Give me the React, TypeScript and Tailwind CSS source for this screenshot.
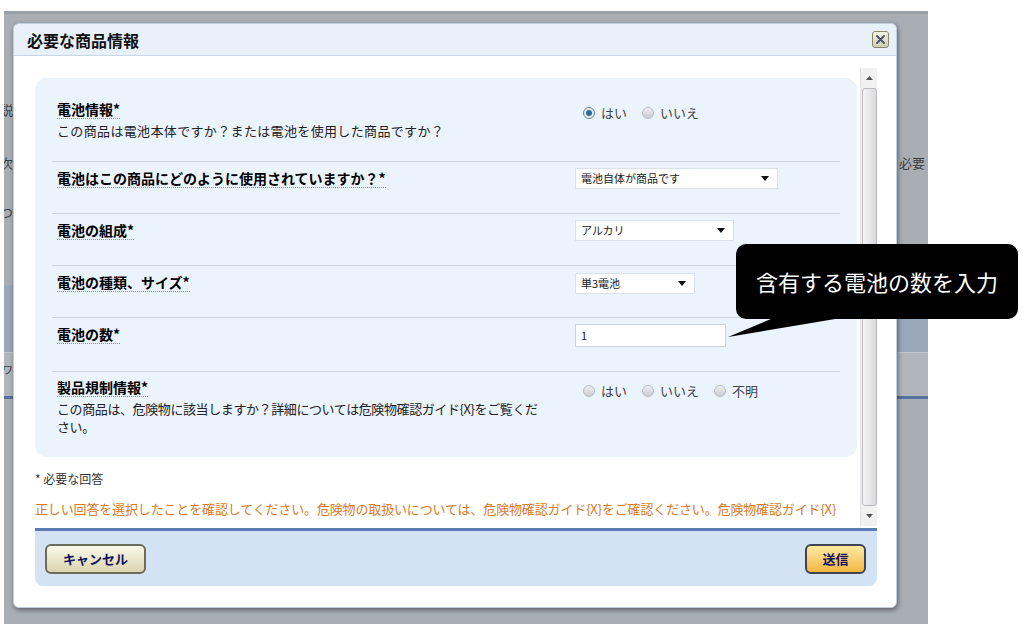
import React from 'react';

const Radio = ({ checked = false }: { checked?: boolean }) => (
  <span
    className={`inline-flex w-[12px] h-[12px] shrink-0 rounded-full border items-center justify-center ${
      checked
        ? 'border-[#6f8396] bg-[#e4ecf3]'
        : 'border-[#b8bdc3] bg-linear-to-b from-[#eef0f2] to-[#c8ccd1]'
    }`}
  >
    {checked && <span className="w-[6px] h-[6px] rounded-full bg-[#2c6a99]" />}
  </span>
);

const RadioGroup = ({ options, selected }: { options: string[]; selected?: number }) => (
  <div className="flex items-center pl-[8px] text-[13px] leading-[18px] text-[#444]">
    {options.map((opt, i) => (
      <div key={opt} className="flex items-center gap-[6px] mr-[15px]">
        <Radio checked={selected === i} />
        <span>{opt}</span>
      </div>
    ))}
  </div>
);

const Select = ({ value, width }: { value: string; width: string }) => (
  <div
    className={`${width} h-[21px] bg-white border border-[#dbe1e8] flex items-center justify-between pl-[5px] pr-[8px] text-[11px] text-[#222]`}
  >
    <span>{value}</span>
    <svg width="8" height="5" viewBox="0 0 8 5">
      <path d="M0 0h8L4 5z" fill="#111" />
    </svg>
  </div>
);

const Label = ({ children }: { children: React.ReactNode }) => (
  <div className="block w-fit font-bold text-[14px] leading-[17px] text-black border-b border-dotted border-[#8a8a8a]">
    {children}
  </div>
);

const Row = ({
  label,
  desc,
  descClass = '',
  right,
  height,
  first = false,
  labelPad,
  rightPad,
}: {
  label: string;
  desc?: React.ReactNode;
  descClass?: string;
  right: React.ReactNode;
  height: string;
  first?: boolean;
  labelPad: string;
  rightPad: string;
}) => (
  <div className={`flex ${height} ${first ? '' : 'border-t border-[#c9d4e1]'}`}>
    <div className={`w-[523px] pl-[5px] ${labelPad}`}>
      <Label>{label}</Label>
      {desc && (
        <div className={`mt-[3px] text-[13px] leading-[18px] text-[#222] whitespace-nowrap ${descClass}`}>{desc}</div>
      )}
    </div>
    <div className={rightPad}>{right}</div>
  </div>
);

export default function App() {
  return (
    <div className="w-[1024px] h-[624px] bg-white relative overflow-hidden pl-[4px] pt-[11px] font-['Noto_Sans_CJK_JP','Liberation_Sans',sans-serif]">
      {/* page behind the overlay */}
      <div className="w-[924px] h-[613px] bg-[#a9aeb5] relative overflow-hidden">
        <div className="flex flex-col text-[13px] text-[#3a3d42]">
          <div className="h-[3px] bg-[#9aa0a7]" />
          <div className="h-[88px]" />
          <div className="h-[16px] leading-[16px] -ml-[4px]">説明</div>
          <div className="h-[37px]" />
          <div className="h-[16px] leading-[16px] flex justify-between">
            <span className="-ml-[4px]">次</span>
            <span className="pr-[3px]">必要</span>
          </div>
          <div className="h-[33px]" />
          <div className="h-[16px] leading-[16px] -ml-[4px]">つ</div>
          <div className="h-[65px]" />
          <div className="h-[67px] bg-[#98a7ba]" />
          <div className="h-[44px] bg-[#b1b6bc] border-t border-[#c3c7cc] pt-[8px] -ml-[2px] text-[11px]">ワ</div>
          <div className="h-[3px] bg-[#55739f]" />
        </div>

        {/* dialog */}
        <div className="absolute left-[9px] top-[12px] w-[884px] h-[585px] bg-white rounded-[6px] border border-[#c3cedb] shadow-[1px_2px_5px_rgba(0,0,0,0.45)] flex flex-col">
          <div className="h-[32px] shrink-0 bg-[#e8f0fa] border-b border-[#c8d6e6] rounded-t-[6px] flex items-center justify-between pl-[13px] pr-[7px]">
            <span className="font-bold text-[16px] text-[#111]">必要な商品情報</span>
            <button className="w-[17px] h-[17px] rounded-[3px] border border-[#87876a] bg-linear-to-b from-[#f4f4e6] to-[#cdcdae] flex items-center justify-center">
              <svg width="9" height="9" viewBox="0 0 9 9">
                <path d="M1 1l7 7M8 1l-7 7" stroke="#4b4b6e" strokeWidth="1.8" strokeLinecap="round" />
              </svg>
            </button>
          </div>

          <div className="flex h-[472px] pl-[21px] pr-[19px]">
            <div className="w-[822px] pt-[22px]">
              <div className="h-[379px] bg-[#ebf3fd] rounded-[12px] pt-[22px] px-[17px]">
                <Row
                  first
                  height="h-[61px]"
                  labelPad="pt-[1px]"
                  rightPad="pt-[4px]"
                  label="電池情報*"
                  descClass="tracking-[0.35px]"
                  desc="この商品は電池本体ですか？または電池を使用した商品ですか？"
                  right={<RadioGroup options={['はい', 'いいえ']} selected={0} />}
                />
                <Row
                  height="h-[52px]"
                  labelPad="pt-[8px]"
                  rightPad="pt-[6px]"
                  label="電池はこの商品にどのように使用されていますか？*"
                  right={<Select value="電池自体が商品です" width="w-[203px]" />}
                />
                <Row
                  height="h-[52px]"
                  labelPad="pt-[8px]"
                  rightPad="pt-[6px]"
                  label="電池の組成*"
                  right={<Select value="アルカリ" width="w-[159px]" />}
                />
                <Row
                  height="h-[52px]"
                  labelPad="pt-[8px]"
                  rightPad="pt-[7px]"
                  label="電池の種類、サイズ*"
                  right={<Select value="単3電池" width="w-[120px]" />}
                />
                <Row
                  height="h-[54px]"
                  labelPad="pt-[8px]"
                  rightPad="pt-[6px]"
                  label="電池の数*"
                  right={
                    <div className="w-[151px] h-[23px] bg-white border border-[#cbd3dd] flex items-center pl-[5px] text-[11px] text-[#222]">
                      1
                    </div>
                  }
                />
                <Row
                  height="h-[86px]"
                  labelPad="pt-[7px]"
                  rightPad="pt-[10px]"
                  label="製品規制情報*"
                  descClass="tracking-[-0.4px]"
                  desc={
                    <>
                      この商品は、危険物に該当しますか？詳細については危険物確認ガイド{'{X}'}をご覧くだ
                      <br />
                      さい。
                    </>
                  }
                  right={<RadioGroup options={['はい', 'いいえ', '不明']} />}
                />
              </div>
              <div className="mt-[14px] text-[12px] leading-[16px] text-[#333]">* 必要な回答</div>
              <div className="mt-[14px] text-[13px] leading-[16px] text-[#d87a26] whitespace-nowrap tracking-[-0.15px]">
                正しい回答を選択したことを確認してください。危険物の取扱いについては、危険物確認ガイド{'{X}'}をご確認ください。危険物確認ガイド{'{X}'}
              </div>
            </div>

            {/* scrollbar */}
            <div className="ml-[3px] mt-[12px] w-[17px] h-[458px] bg-[#f1f1f2] border-l border-[#e2e2e4] flex flex-col items-center">
              <div className="h-[20px] flex items-center justify-center">
                <svg width="7" height="4" viewBox="0 0 7 4">
                  <path d="M0 4h7L3.5 0z" fill="#555" />
                </svg>
              </div>
              <div className="w-[15px] flex-1 rounded-[3px] border border-[#b9b9be] bg-linear-to-r from-[#f4f4f6] to-[#d9d9de] flex items-center justify-center">
                <div className="flex flex-col gap-[2px]">
                  <div className="w-[6px] h-px bg-[#8d8d93]" />
                  <div className="w-[6px] h-px bg-[#8d8d93]" />
                  <div className="w-[6px] h-px bg-[#8d8d93]" />
                </div>
              </div>
              <div className="h-[20px] flex items-center justify-center">
                <svg width="7" height="4" viewBox="0 0 7 4">
                  <path d="M0 0h7L3.5 4z" fill="#555" />
                </svg>
              </div>
            </div>
          </div>

          {/* footer */}
          <div className="mx-[21px] mr-[19px] h-[58px] border-t-[3px] border-[#5a7bb4] bg-[#d4e3f3] rounded-b-[8px] flex items-center justify-between pl-[10px] pr-[11px]">
            <button className="w-[101px] h-[30px] rounded-[6px] border-2 border-[#6c6c58] bg-linear-to-b from-[#fbf9ea] to-[#d9d4ad] font-bold text-[13px] text-[#13135a]">
              キャンセル
            </button>
            <button className="w-[61px] h-[30px] rounded-[6px] border-2 border-[#3f4452] bg-linear-to-b from-[#fee9a2] to-[#f1b63a] font-bold text-[13px] text-[#13135a]">
              送信
            </button>
          </div>
        </div>
      </div>

      {/* callout */}
      <div className="absolute left-[736px] top-[244px] w-[282px] h-[75px] rounded-[10px] bg-black flex items-center justify-center text-white text-[22px]">
        含有する電池の数を入力
      </div>
      <svg className="absolute left-[726px] top-[316px]" width="130" height="24" viewBox="0 0 130 24">
        <polygon points="52,0 127,0 2,21" fill="#000" />
      </svg>
    </div>
  );
}
